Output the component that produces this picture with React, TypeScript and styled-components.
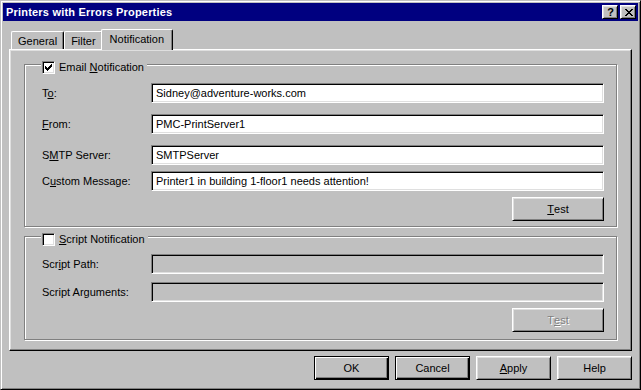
import React from "react"
import styled, { createGlobalStyle, css } from "styled-components"

const GlobalStyle = createGlobalStyle`
    html, body {
        margin: 0;
        padding: 0;
        background: #c0c0c0;
    }
    body {
        font-family: "Liberation Sans", Arial, sans-serif;
        font-size: 11px;
        color: #000;
        overflow: hidden;
    }
`

// pixel glyphs, drawn like the old 1-bit bitmaps
const CLOSE_GLYPH = [
    "XX....XX",
    ".XX..XX.",
    "..XXXX..",
    "...XX...",
    "..XXXX..",
    ".XX..XX.",
    "XX....XX",
]

const CHECK_GLYPH = [
    "......X",
    ".....XX",
    "X...XXX",
    "XX.XXX.",
    "XXXXX..",
    ".XXX...",
    "..X....",
]

const PixelGlyph = ({ rows, color = "#000" }: { rows: string[], color?: string }) => (
    <svg width={rows[0].length} height={rows.length} shapeRendering="crispEdges">
        {rows.flatMap((row, y) => row.split("").map((c, x) => c === "X"
            ? <rect key={`${x}-${y}`} x={x} y={y} width={1} height={1} fill={color} />
            : null))}
    </svg>
)

const raised = css`
    border: 1px solid;
    border-color: #fff #000 #000 #fff;
    box-shadow: inset 1px 1px #dfdfdf, inset -1px -1px #808080;
`

const sunken = css`
    border: 1px solid;
    border-color: #808080 #fff #fff #808080;
    box-shadow: inset 1px 1px #000, inset -1px -1px #dfdfdf;
`

type FieldProps = { label: React.ReactNode, value?: string, top: number, disabled?: boolean }

const Field = ({ label, value, top, disabled }: FieldProps) => (
    <FieldRow $top={top}>
        <FieldLabel>{label}</FieldLabel>
        <TextBox $disabled={!!disabled}>{value}</TextBox>
    </FieldRow>
)

const Caption = ({ checked, children }: { checked: boolean, children: React.ReactNode }) => (
    <Legend>
        <CheckBox>{checked && <PixelGlyph rows={CHECK_GLYPH} />}</CheckBox>
        <CaptionText>{children}</CaptionText>
    </Legend>
)

const App = () => {
    return <>
        <GlobalStyle />
        <Window>
            <TitleBar>
                <Title>Printers with Errors Properties</Title>
                <TitleButtons>
                    <TitleButton>?</TitleButton>
                    <TitleButton><PixelGlyph rows={CLOSE_GLYPH} /></TitleButton>
                </TitleButtons>
            </TitleBar>
            <Body>
                <TabStrip>
                    <Tab $active={false}>General</Tab>
                    <Tab $active={false}>Filter</Tab>
                    <Tab $active={true}>Notification</Tab>
                </TabStrip>
                <TabPanel>
                    <Group $padTop={15} $padBottom={5}>
                        <Caption checked={true}>Email <u>N</u>otification</Caption>
                        <Field top={0} label={<>T<u>o</u>:</>} value="Sidney@adventure-works.com" />
                        <Field top={11} label={<><u>F</u>rom:</>} value="PMC-PrintServer1" />
                        <Field top={11} label={<>S<u>M</u>TP Server:</>} value="SMTPServer" />
                        <Field top={6} label={<>C<u>u</u>stom Message:</>} value="Printer1 in building 1-floor1 needs attention!" />
                        <ButtonRow $top={6}>
                            <PushButton $width={92} $default={false} $disabled={false}><u>T</u>est</PushButton>
                        </ButtonRow>
                    </Group>
                    <Group $padTop={14} $padBottom={7} $top={6}>
                        <Caption checked={false}><u>S</u>cript Notification</Caption>
                        <Field top={0} label={<>Scr<u>i</u>pt Path:</>} disabled />
                        <Field top={8} label="Script Arguments:" disabled />
                        <ButtonRow $top={6}>
                            <PushButton $width={92} $default={false} $disabled={true}>T<u>e</u>st</PushButton>
                        </ButtonRow>
                    </Group>
                </TabPanel>
                <DialogButtons>
                    <PushButton $width={75} $default={true} $disabled={false}>OK</PushButton>
                    <PushButton $width={75} $default={true} $disabled={false}>Cancel</PushButton>
                    <PushButton $width={75} $default={false} $disabled={false}><u>A</u>pply</PushButton>
                    <PushButton $width={75} $default={false} $disabled={false}>Help</PushButton>
                </DialogButtons>
            </Body>
        </Window>
    </>
}

export default App

const Window = styled.div`
    width: 641px;
    height: 390px;
    box-sizing: border-box;
    background: #c0c0c0;
    border: 1px solid;
    border-color: #c0c0c0 #000 #000 #c0c0c0;
    box-shadow: inset 1px 1px #fff, inset -1px -1px #808080;
    padding: 2px;
    display: flex;
    flex-direction: column;
`

const TitleBar = styled.div`
    height: 18px;
    flex: none;
    background: #000080;
    display: flex;
    align-items: center;
    justify-content: space-between;
    padding: 0 2px 0 3px;
`

const Title = styled.div`
    color: #fff;
    font-weight: bold;
    font-size: 11px;
    letter-spacing: 0.2px;
    white-space: nowrap;
`

const TitleButtons = styled.div`
    display: flex;
    gap: 2px;
`

const TitleButton = styled.div`
    ${raised}
    width: 16px;
    height: 14px;
    box-sizing: border-box;
    background: #c0c0c0;
    display: flex;
    align-items: center;
    justify-content: center;
    font-weight: bold;
    font-size: 11px;
    line-height: 12px;
    padding-left: 1px;
`

const Body = styled.div`
    display: flex;
    flex-direction: column;
    padding: 0 6px;
`

const TabStrip = styled.div`
    display: flex;
    align-items: flex-end;
    margin-top: 8px;
    padding-left: 2px;
    position: relative;
    z-index: 1;
`

const Tab = styled.div<{ $active: boolean }>`
    box-sizing: border-box;
    height: ${({ $active }) => $active ? 21 : 18}px;
    padding: 0 ${({ $active }) => $active ? 8 : 6}px ${({ $active }) => $active ? 3 : 0}px;
    margin: 0 ${({ $active }) => $active ? "-2px -1px" : "0 0"};
    border-left: 1px solid #fff;
    border-top: 1px solid #fff;
    border-right: 1px solid #000;
    border-radius: 2px 2px 0 0;
    box-shadow: inset -1px 0 #808080;
    background: #c0c0c0;
    display: flex;
    align-items: center;
    white-space: nowrap;
    position: relative;
    z-index: ${({ $active }) => $active ? 2 : 0};
`

const TabPanel = styled.div`
    height: 302px;
    box-sizing: border-box;
    border: 1px solid;
    border-color: #fff #000 #000 #fff;
    box-shadow: inset -1px -1px #808080, inset 1px 1px #dfdfdf;
    padding: 11px 14px 0;
`

const Group = styled.fieldset<{ $padTop: number, $padBottom: number, $top?: number }>`
    margin: ${({ $top }) => $top ?? 0}px 0 0;
    min-width: 0;
    border: 1px solid #808080;
    box-shadow: inset 1px 1px #fff, 1px 1px #fff;
    padding: ${({ $padTop }) => $padTop}px 12px ${({ $padBottom }) => $padBottom}px 17px;
`

const Legend = styled.legend`
    display: flex;
    align-items: flex-start;
    height: 7px;
    padding: 0 3px 0 1px;
    margin-left: -1px;
    background: #c0c0c0;
`

const CheckBox = styled.div`
    ${sunken}
    width: 13px;
    height: 13px;
    box-sizing: border-box;
    flex: none;
    background: #fff;
    display: flex;
    align-items: center;
    justify-content: center;
`

const CaptionText = styled.span`
    margin-left: 4px;
    line-height: 13px;
    background: #c0c0c0;
    white-space: nowrap;
`

const FieldRow = styled.div<{ $top: number }>`
    display: flex;
    align-items: center;
    height: 20px;
    margin-top: ${({ $top }) => $top}px;
`

const FieldLabel = styled.div`
    flex: 0 0 109px;
    white-space: nowrap;
`

const TextBox = styled.div<{ $disabled: boolean }>`
    ${sunken}
    flex: 1;
    height: 20px;
    box-sizing: border-box;
    padding: 0 4px;
    line-height: 18px;
    background: ${({ $disabled }) => $disabled ? "#c0c0c0" : "#fff"};
    white-space: nowrap;
    overflow: hidden;
`

const ButtonRow = styled.div<{ $top: number }>`
    display: flex;
    justify-content: flex-end;
    margin-top: ${({ $top }) => $top}px;
`

const PushButton = styled.div<{ $width: number, $default: boolean, $disabled: boolean }>`
    width: ${({ $width }) => $width}px;
    height: 24px;
    box-sizing: border-box;
    display: flex;
    align-items: center;
    justify-content: center;
    background: #c0c0c0;
    ${({ $default }) => $default ? css`
        border: 1px solid #000;
        box-shadow: inset 1px 1px #fff, inset -1px -1px #000, inset -2px -2px #808080;
    ` : raised}
    color: ${({ $disabled }) => $disabled ? "#808080" : "#000"};
    text-shadow: ${({ $disabled }) => $disabled ? "1px 1px 0 #fff" : "none"};
`

const DialogButtons = styled.div`
    display: flex;
    justify-content: flex-end;
    gap: 6px;
    margin-top: 5px;
`
